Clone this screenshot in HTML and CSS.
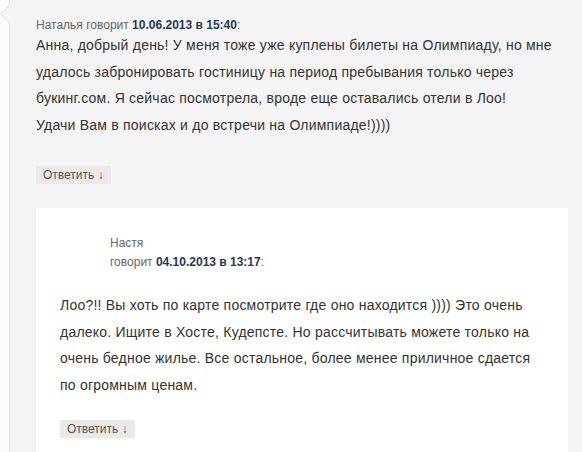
FILE: index.html
```html
<!DOCTYPE html>
<html lang="ru">
<head>
<meta charset="utf-8">
<link rel="stylesheet" href="styles.css">
</head>
<body>
<div class="comment">
  <div class="meta">Наталья говорит <a class="date" href="#">10.06.2013 в 15:40</a>:</div>
  <p class="text">Анна, добрый день! У меня тоже уже куплены билеты на Олимпиаду, но мне удалось забронировать гостиницу на период пребывания только через букинг.сом. Я сейчас посмотрела, вроде еще оставались отели в Лоо!<br>Удачи Вам в поисках и до встречи на Олимпиаде!))))</p>
  <div class="reply"><span class="btn">Ответить ↓</span></div>
  <div class="child">
    <div class="child-meta">
      <div class="name">Настя</div>
      <div class="says">говорит <a class="date" href="#">04.10.2013 в 13:17</a>:</div>
    </div>
    <p class="text">Лоо?!! Вы хоть по карте посмотрите где оно находится )))) Это очень далеко. Ищите в Хосте, Кудепсте. Но рассчитывать можете только на очень бедное жилье. Все остальное, более менее приличное сдается по огромным ценам.</p>
    <div class="reply"><span class="btn">Ответить ↓</span></div>
  </div>
</div>
</body>
</html>
```
FILE: styles.css
```css
html, body {
  margin: 0;
  padding: 0;
  background: #fbfbfb;
  height: 452px;
  overflow: hidden;
}
body {
  font-family: "Liberation Sans", Arial, sans-serif;
  color: #333;
}
.comment {
  position: relative;
  margin-left: 9px;
  background: #f4f4f4;
  border-left: 1px solid #e4e4e4;
  padding: 16px 0 0 26px;
  height: 452px;
  box-sizing: border-box;
}
.comment::before {
  content: "";
  position: absolute;
  left: -10px;
  top: 4px;
  border-top: 10px solid transparent;
  border-bottom: 10px solid transparent;
  border-right: 10px solid #e4e4e4;
}
.comment::after {
  content: "";
  position: absolute;
  left: -9px;
  top: 5px;
  border-top: 9px solid transparent;
  border-bottom: 9px solid transparent;
  border-right: 9px solid #f4f4f4;
}
.meta {
  font-size: 12px;
  color: #666;
  line-height: 18px;
}
.date {
  color: #1e3a56;
  font-weight: bold;
  text-decoration: none;
}
.text {
  margin: -2px 0 0;
  font-size: 14px;
  letter-spacing: 0.22px;
  line-height: 26.5px;
  padding-right: 28px;
}
.reply {
  margin-top: 27px;
  height: 18px;
}
.btn {
  display: inline-block;
  background: #e9e9e9;
  color: #555;
  font-size: 12px;
  padding: 0 7px;
  height: 18px;
  line-height: 18px;
}
.child {
  margin: 25px 14px 0 0;
  background: #fff;
  padding: 26px 24px 20px 24px;
}
.child-meta {
  padding-left: 50px;
  font-size: 12px;
  color: #666;
  line-height: 19px;
}
.child .text {
  margin-top: 20px;
  padding-right: 0;
}
.child .reply {
  margin-top: 21px;
}
```
